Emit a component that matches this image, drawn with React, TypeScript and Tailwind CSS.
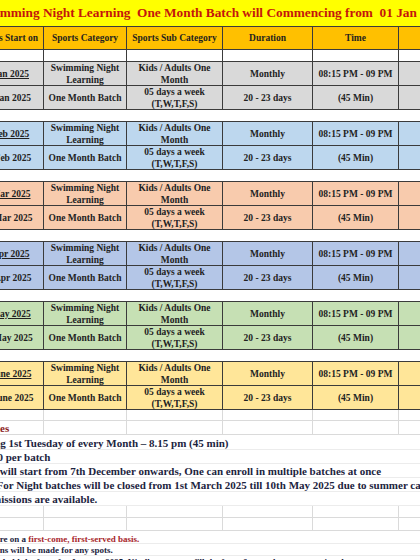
const serif = "font-['Liberation_Serif','Times_New_Roman',serif]"

type Group = { bg: string; start: string; end: string }

const groups: Group[] = [
  { bg: 'bg-[#d9d9d9]', start: '07 Jan 2025', end: '31 Jan 2025' },
  { bg: 'bg-[#bdd7ee]', start: '04 Feb 2025', end: '28 Feb 2025' },
  { bg: 'bg-[#f8cbad]', start: '04 Mar 2025', end: '31 Mar 2025' },
  { bg: 'bg-[#b4c6e7]', start: '01 Apr 2025', end: '30 Apr 2025' },
  { bg: 'bg-[#c6e0b4]', start: '06 May 2025', end: '31 May 2025' },
  { bg: 'bg-[#ffe699]', start: '03 June 2025', end: '30 June 2025' },
]

const cols = 'grid grid-cols-[90px_83px_96px_90px_86px_75px]'
const cell =
  'h-[24px] border-r border-b border-[#3b3b3b] flex flex-col items-center justify-center text-center leading-[12px]'

function BatchGroup({ g }: { g: Group }) {
  return (
    <div className={`${cols} border-t border-[#3b3b3b] ${g.bg}`}>
      <div className={`${cell} pl-[13px]`}>
        <span className="underline">{g.start}</span>
      </div>
      <div className={cell}>
        <span>Swimming Night</span>
        <span>Learning</span>
      </div>
      <div className={cell}>
        <span>Kids / Adults One</span>
        <span>Month</span>
      </div>
      <div className={cell}>Monthly</div>
      <div className={cell}>08:15 PM - 09 PM</div>
      <div className={cell}></div>

      <div className={`${cell} pl-[17px]`}>{g.end}</div>
      <div className={cell}>One Month Batch</div>
      <div className={cell}>
        <span>05 days a week</span>
        <span>(T,W,T,F,S)</span>
      </div>
      <div className={cell}>20 - 23 days</div>
      <div className={cell}>(45 Min)</div>
      <div className={cell}></div>
    </div>
  )
}

// plain sheet row with light excel gridlines
function EmptyRow({ h }: { h: string }) {
  return (
    <div className={`${cols} ${h}`}>
      {[0, 1, 2, 3, 4, 5].map(i => (
        <div key={i} className="border-r border-b border-[#dadada]" />
      ))}
    </div>
  )
}

export default function App() {
  return (
    <div className={`w-[420px] h-[560px] overflow-hidden bg-white ${serif} font-bold text-[#222]`}>
      <div className="w-[520px] -ml-[46px]">
        {/* Title */}
        <div className="h-[26px] bg-[#ffff00] flex items-center pl-[25px] text-[13.3px] text-[#c4160c] whitespace-pre">
          Swimming Night Learning  One Month Batch will Commencing from  01 Jan 2025
        </div>

        {/* Header */}
        <div className={`${cols} bg-[#ffc000] border-y border-[#3b3b3b] h-[24px] text-[9.5px] text-[#1f1f1f]`}>
          <div className="border-r border-[#3b3b3b] flex items-center justify-center pl-[12px]">Batches Start on</div>
          <div className="border-r border-[#3b3b3b] flex items-center justify-center">Sports Category</div>
          <div className="border-r border-[#3b3b3b] flex items-center justify-center">Sports Sub Category</div>
          <div className="border-r border-[#3b3b3b] flex items-center justify-center">Duration</div>
          <div className="border-r border-[#3b3b3b] flex items-center justify-center">Time</div>
          <div className="border-r border-[#3b3b3b]" />
        </div>
        <div className={`${cols} h-[11px]`}>
          {[0, 1, 2, 3, 4, 5].map(i => (
            <div key={i} className="border-r border-[#3b3b3b]" />
          ))}
        </div>

        <div className="flex flex-col gap-[11px] text-[9.5px]">
          {groups.map(g => (
            <BatchGroup key={g.start} g={g} />
          ))}
        </div>

        {/* Notes */}
        <EmptyRow h="h-[11px]" />
        <div className="relative">
          <EmptyRow h="h-[14px]" />
          <div className="absolute inset-0 flex items-center pl-[29px] text-[11px] text-[#8b1c1c] leading-none">
            Notes
          </div>
        </div>
        <div className="pt-[1px] text-[11px] text-[#1c2440] leading-[14px] whitespace-nowrap">
          <div className="h-[14px] border-b border-[#ececec] -ml-[17px]">
            Batch Starting 1st Tuesday of every Month – 8.15 pm (45 min)
          </div>
          <div className="h-[14px] border-b border-[#ececec] -ml-[18px]">Fees: Rs. 2500 per batch</div>
          <div className="h-[14px] border-b border-[#ececec] -ml-[15px]">
            Registration will start from 7th December onwards, One can enroll in multiple batches at once
          </div>
          <div className="h-[14px] border-b border-[#ececec] -ml-[14px]">
            Admissions For Night batches will be closed from 1st March 2025 till 10th May 2025 due to summer camp
          </div>
          <div className="h-[14px] border-b border-[#ececec] ml-[24px]">Admissions are available.</div>
        </div>
        <EmptyRow h="h-[12px]" />
        <EmptyRow h="h-[13px]" />

        <div className="text-[9px] text-[#1c2440] leading-[12px] whitespace-nowrap">
          <div className="h-[13px] border-b border-[#ececec] pt-[2px] -ml-[12px]">
            Registrations are on a <span className="text-[#a8262b]">first-come, first-served basis.</span>
          </div>
          <div className="h-[12px] border-b border-[#ececec] ml-[1px]">
            No exceptions will be made for any spots.
          </div>
          <div className="h-[12px] ml-[20px]">
            Kindly hold the form for January 2025, Kindly ensure to fill the form &amp; complete payment in advance.
          </div>
        </div>
      </div>
    </div>
  )
}
